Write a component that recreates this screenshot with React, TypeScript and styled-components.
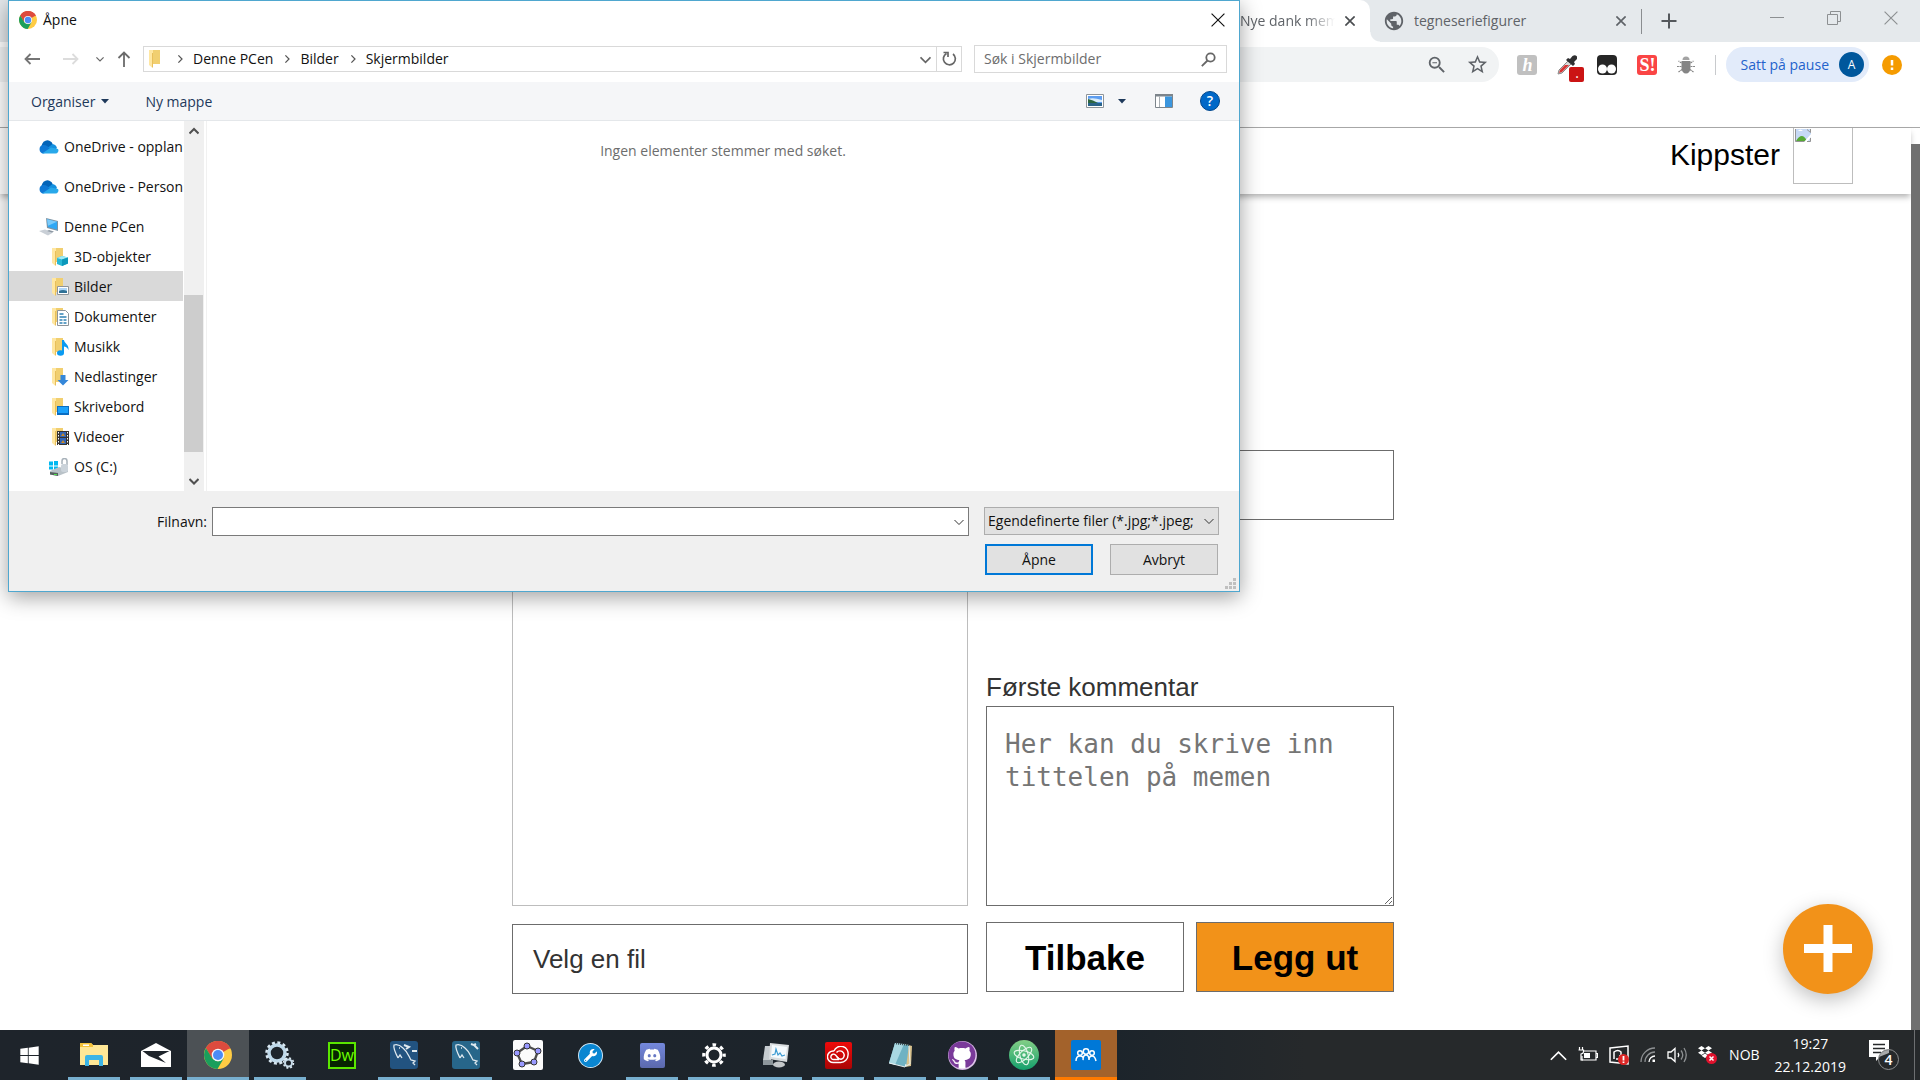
import React from 'react';
import styled, { createGlobalStyle } from 'styled-components';
import { FaDiscord, FaDropbox, FaGithub, FaWrench, FaWindows } from 'react-icons/fa';
import { MdPublic, MdStarBorder, MdZoomOut } from 'react-icons/md';

const ui = '"Open Sans", "Noto Sans", sans-serif';
const sans = '"Liberation Sans", Arial, sans-serif';
const mono = '"DejaVu Sans Mono", monospace';

const GlobalStyle = createGlobalStyle`
  *, *::before, *::after { box-sizing: border-box; }
  body { margin: 0; background: #fff; font-family: ${ui}; font-size: 14px; line-height: 20px; overflow: hidden; }
  button, input, select, textarea { font: inherit; color: inherit; margin: 0; border-radius: 0; }
  button { padding: 0; border: 0; background: none; cursor: pointer; }
  svg { display: block; flex: none; }
`;

const Screen = styled.div`
  position: relative;
  display: flex;
  flex-direction: column;
  min-height: 100vh;
`;

/* ---------- browser chrome ---------- */

const TabStrip = styled.div`
  display: flex;
  justify-content: flex-end;
  height: 42px;
  background: #e5e9ec;
  color: #5f6368;
`;

const Tab = styled.div<{ $active?: boolean }>`
  position: relative;
  display: flex;
  align-items: center;
  gap: 9px;
  width: ${p => (p.$active ? 176 : 271)}px;
  padding: ${p => (p.$active ? '0 14px 0 46px' : '0 14px 0 13px')};
  background: ${p => (p.$active ? '#fff' : 'transparent')};
  border-radius: 0 10px 0 0;
  &::after {
    content: '';
    display: ${p => (p.$active ? 'block' : 'none')};
    position: absolute;
    right: -10px;
    bottom: 0;
    width: 10px;
    height: 10px;
    background: radial-gradient(circle at 100% 0, transparent 9px, #fff 10px);
  }
`;

const TabTitle = styled.span<{ $fade?: boolean }>`
  flex: 1;
  overflow: hidden;
  white-space: nowrap;
  mask-image: ${p => (p.$fade ? 'linear-gradient(90deg, #000 70%, transparent)' : 'none')};
`;

const IconButton = styled.button`
  display: flex;
  align-items: center;
  justify-content: center;
  min-width: 12px;
`;

const StripDivider = styled.span`
  width: 1px;
  height: 25px;
  margin: 9px 12px 0 0;
  background: #8a8d90;
`;

const WindowButtons = styled.div`
  display: flex;
  align-items: flex-start;
  gap: 43px;
  margin: 11px 22px 0 86px;
`;

const Toolbar = styled.div`
  display: flex;
  align-items: center;
  height: 85px;
  padding: 5px 18px 45px 0;
  background: #fff;
`;

const Omnibox = styled.div`
  display: flex;
  flex: 1;
  align-items: center;
  justify-content: flex-end;
  gap: 18px;
  height: 35px;
  padding-right: 10px;
  border-radius: 0 18px 18px 0;
  background: #f1f3f4;
  color: #5f6368;
`;

const Extensions = styled.div`
  display: flex;
  align-items: center;
  gap: 20px;
  margin: 0 0 0 18px;
`;

const ExtTile = styled.span<{ $bg: string }>`
  display: flex;
  align-items: center;
  justify-content: center;
  width: 20px;
  height: 20px;
  border-radius: 3px;
  background: ${p => p.$bg};
  color: #fff;
  font: bold 18px/20px "Liberation Serif", serif;
`;

const PickerIcon = styled.span`
  position: relative;
  display: flex;
  width: 20px;
  height: 20px;
`;

const PickerBadge = styled.span`
  position: absolute;
  left: 12px;
  top: 12px;
  width: 15px;
  height: 15px;
  border-radius: 2px;
  background: #cb1414;
  color: #fff;
  font-size: 14px;
  line-height: 12px;
  text-align: center;
`;

const BarDivider = styled.span`
  width: 1px;
  height: 20px;
  background: #c8cacd;
`;

const ProfilePill = styled.button`
  display: flex;
  align-items: center;
  gap: 10px;
  height: 35px;
  margin: 0 13px 0 10px;
  padding: 0 5px 0 14px;
  border-radius: 18px;
  background: #e2ebfa;
  color: #2462cc;
`;

const Avatar = styled.span`
  width: 25px;
  height: 25px;
  border-radius: 50%;
  background: #00579c;
  color: #fff;
  font-size: 12px;
  line-height: 25px;
`;

/* ---------- web page ---------- */

const Viewport = styled.div`
  display: flex;
  flex: 1;
  border-top: 1px solid #a9a9a9;
`;

const Page = styled.div`
  display: flex;
  flex: 1;
  flex-direction: column;
  background: #fff;
`;

const ScrollGutter = styled.div`
  width: 9px;
  padding-top: 16px;
  &::before { content: ''; display: block; height: 100%; background: #707070; }
`;

const SiteHeader = styled.header`
  display: flex;
  align-items: flex-start;
  justify-content: flex-end;
  gap: 13px;
  height: 66px;
  padding-right: 58px;
  box-shadow: 0 4px 6px -1px rgba(0, 0, 0, 0.3);
`;

const UserName = styled.span`
  font: 30px/54px ${sans};
  color: #000;
`;

const BrokenImage = styled.span`
  width: 60px;
  height: 56px;
  padding: 1px;
  border: 1px solid #bdbdbd;
  border-top: 0;
`;

const Main = styled.main`
  display: flex;
  flex: 1;
  flex-direction: column;
  align-items: center;
  justify-content: flex-end;
  padding: 36px 5px 36px 0;
`;

const Form = styled.form`
  display: grid;
  grid-template-columns: 456px 408px;
  gap: 18px;
  min-height: 544px;
  font: 26px/30px ${sans};
  color: #333;
`;

const Column = styled.div<{ $gap: number }>`
  display: flex;
  flex-direction: column;
  gap: ${p => p.$gap}px;
`;

const Preview = styled.div`
  flex: 1;
  border: 1px solid #bdbdbd;
`;

const FileButton = styled.button`
  height: 70px;
  padding: 0 20px;
  border: 1px solid #6c6c6c;
  background: #fff;
  text-align: left;
`;

const TitleInput = styled.input`
  height: 70px;
  padding: 0 20px;
  border: 1px solid #6c6c6c;
  background: #fff;
`;

const Field = styled.div`
  display: flex;
  flex-direction: column;
  gap: 4px;
  margin-top: auto;
`;

const Comment = styled.textarea`
  height: 200px;
  padding: 21px 18px;
  border: 1px solid #6c6c6c;
  background: #fff;
  font: 26px/33px ${mono};
  overflow: hidden;
  &::placeholder { color: #757575; }
`;

const Actions = styled.div`
  display: flex;
  gap: 12px;
  padding-bottom: 2px;
`;

const ActionButton = styled.button<{ $primary?: boolean }>`
  flex: 1;
  height: 70px;
  padding-top: 2px;
  border: 1px solid #6c6c6c;
  background: ${p => (p.$primary ? '#f29219' : '#fff')};
  color: #000;
  font-size: 35px;
  font-weight: bold;
`;

const Fab = styled.button`
  position: absolute;
  right: 47px;
  bottom: 86px;
  display: flex;
  align-items: center;
  justify-content: center;
  width: 90px;
  height: 90px;
  border-radius: 50%;
  background: #f29219;
  box-shadow: 0 6px 20px rgba(0, 0, 0, 0.25);
`;

/* ---------- file dialog ---------- */

const Dialog = styled.section`
  position: absolute;
  left: 8px;
  top: 0;
  display: flex;
  flex-direction: column;
  width: 1232px;
  max-width: calc(100% - 16px);
  border: 1px solid #4fa7cf;
  background: #fff;
  color: #111;
  box-shadow: 0 5px 20px rgba(0, 0, 0, 0.38);
`;

const TitleBar = styled.header`
  display: flex;
  align-items: center;
  gap: 6px;
  height: 38px;
  padding: 0 14px 0 10px;
`;

const Grow = styled.span`
  flex: 1;
`;

const AddressRow = styled.div`
  display: flex;
  align-items: center;
  height: 43px;
  padding: 0 12px 3px 15px;
`;

const NavButtons = styled.div`
  display: flex;
  align-items: center;
  gap: 15px;
  width: 119px;
`;

const UpButton = styled(IconButton)`
  margin-left: -4px;
`;

const AddressBox = styled.div`
  display: flex;
  flex: 1;
  align-items: center;
  height: 26px;
  margin-right: 12px;
  padding-left: 2px;
  border: 1px solid #d9d9d9;
`;

const Crumb = styled.button`
  display: flex;
  align-items: center;
  gap: 9px;
  margin-left: 10px;
  line-height: 20px;
`;

const Refresh = styled.button`
  display: flex;
  align-items: center;
  justify-content: center;
  width: 25px;
  height: 24px;
  margin-left: 5px;
  border-left: 1px solid #d9d9d9;
`;

const SearchBox = styled.label`
  display: flex;
  align-items: center;
  width: 253px;
  height: 28px;
  padding: 0 10px 0 9px;
  border: 1px solid #d9d9d9;
`;

const SearchInput = styled.input`
  flex: 1;
  min-width: 0;
  padding: 0;
  border: 0;
  outline: 0;
  &::placeholder { color: #6d6d6d; }
`;

const CommandBar = styled.div`
  display: flex;
  align-items: center;
  height: 39px;
  padding: 0 19px 0 22px;
  border-bottom: 1px solid #e4e7ea;
  background: #f5f6f8;
  color: #1e395b;
`;

const Command = styled.button`
  display: flex;
  align-items: center;
  gap: 6px;
  margin-right: 36px;
  padding-top: 1px;
`;

const ViewTools = styled.div`
  display: flex;
  align-items: center;
  margin-left: auto;
`;

const HelpButton = styled.button`
  width: 20px;
  height: 20px;
  margin-left: 27px;
  border: 1px solid #00478c;
  border-radius: 50%;
  background: #0068c8;
  color: #fff;
  font-weight: 600;
  line-height: 18px;
`;

const ViewButton = styled.button`
  display: flex;
  align-items: center;
  gap: 14px;
  margin-right: 29px;
`;

const Browse = styled.div`
  display: flex;
  height: 370px;
`;

const Tree = styled.ul`
  width: 174px;
  margin: 0;
  padding: 10px 0;
  list-style: none;
  overflow: hidden;
`;

const TreeItem = styled.li<{ $gap?: boolean }>`
  margin-bottom: ${p => (p.$gap ? 10 : 0)}px;
`;

const TreeButton = styled.button<{ $level: number; $selected?: boolean }>`
  display: flex;
  align-items: center;
  gap: 5px;
  width: 100%;
  height: 30px;
  padding: 1px 0 0 ${p => (p.$level === 1 ? 30 : 40)}px;
  background: ${p => (p.$selected ? '#d9d9d9' : 'transparent')};
  white-space: nowrap;
`;

const TreeScroll = styled.div`
  display: flex;
  flex-direction: column;
  align-items: center;
  width: 20px;
  margin-left: 1px;
  padding: 5px 1px 5px 0;
  background: #f0f0f0;
`;

const TreeThumb = styled.span`
  width: 19px;
  height: 157px;
  margin: auto 0 24px;
  background: #cdcdcd;
`;

const Listing = styled.p`
  flex: 1;
  margin: 0 0 0 2px;
  padding: 20px 0 0;
  border-left: 1px solid #f1f1f1;
  color: #6d6d6d;
  text-align: center;
`;

const Footer = styled.footer`
  position: relative;
  display: grid;
  grid-template-columns: 757px 235px;
  justify-content: end;
  column-gap: 15px;
  row-gap: 8px;
  height: 100px;
  padding: 16px 20px 16px 0;
  background: #f0f0f0;
`;

const FileName = styled.div`
  position: relative;
  display: flex;
  align-items: center;
  height: 29px;
  border: 1px solid #7a7a7a;
  background: #fff;
`;

const FileNameLabel = styled.label`
  position: absolute;
  right: calc(100% + 6px);
`;

const FileNameInput = styled.input`
  flex: 1;
  height: 27px;
  padding: 0 4px;
  border: 0;
  outline: 0;
`;

const Chevron = styled.span`
  padding: 0 4px;
  pointer-events: none;
`;

const TypePicker = styled.div`
  display: flex;
  align-items: center;
  height: 28px;
  border: 1px solid #adadad;
  background: #e1e1e1;
`;

const TypeSelect = styled.select`
  flex: 1;
  min-width: 0;
  height: 26px;
  padding: 0 0 0 3px;
  border: 0;
  outline: 0;
  appearance: none;
  background: transparent;
`;

const DialogActions = styled.div`
  display: flex;
  grid-column: 2;
  justify-content: space-between;
  padding: 0 1px;
`;

const DialogButton = styled.button<{ $default?: boolean }>`
  width: 108px;
  height: 31px;
  border: ${p => (p.$default ? '2px solid #0078d7' : '1px solid #adadad')};
  background: #e1e1e1;
`;

const Grip = styled.svg`
  position: absolute;
  right: 3px;
  bottom: 2px;
`;

/* ---------- taskbar ---------- */

const Taskbar = styled.nav`
  display: flex;
  align-items: center;
  height: 50px;
  background: linear-gradient(90deg, #1e242b 0%, #1c242b 58%, #26292b 68%, #26292b 100%);
  color: #fff;
`;

const StartButton = styled.button`
  display: flex;
  align-items: center;
  justify-content: center;
  width: 63px;
  padding-right: 4px;
  color: #fff;
`;

const TaskButton = styled.button<{ $state?: 'open' | 'active' | 'alert' }>`
  position: relative;
  display: flex;
  align-items: center;
  justify-content: center;
  width: 62px;
  height: 50px;
  background: ${p => (p.$state === 'active' ? '#4c5155' : p.$state === 'alert' ? '#a3622b' : 'transparent')};
  &::after {
    content: '';
    position: absolute;
    left: ${p => (p.$state === 'open' ? 5 : 0)}px;
    right: ${p => (p.$state === 'open' ? 5 : 0)}px;
    bottom: 0;
    height: 3px;
    background: ${p => (!p.$state ? 'transparent' : p.$state === 'alert' ? '#ff7a00' : '#77afcf')};
  }
`;

const AppTile = styled.span<{ $bg: string; $size?: number }>`
  display: flex;
  align-items: center;
  justify-content: center;
  width: ${p => p.$size ?? 28}px;
  height: ${p => p.$size ?? 28}px;
  border-radius: 2px;
  background: ${p => p.$bg};
`;

const RoundTile = styled(AppTile)`
  border-radius: 50%;
  border: 1px solid rgba(255, 255, 255, 0.8);
`;

const DiscTile = styled(AppTile)`
  border-radius: 50%;
`;

const DwTile = styled.span`
  width: 28px;
  height: 27px;
  border: 2px solid #5ae600;
  background: #072401;
  color: #6bff00;
  font-size: 16px;
  line-height: 22px;
`;

const Tray = styled.div`
  display: flex;
  align-items: center;
  gap: 11px;
  margin-left: auto;
`;

const Clock = styled.time`
  margin: 0 12px 0 4px;
  line-height: 23px;
  text-align: center;
`;

const ShowDesktop = styled.span`
  width: 6px;
  height: 50px;
  margin-left: 4px;
  border-left: 1px solid #6d6f71;
`;

/* ---------- drawings ---------- */

const Chrome = ({ size }: { size: number }) => (
  <svg width={size} height={size} viewBox="0 0 28 28">
    <circle cx="14" cy="14" r="14" fill="#fc4" />
    <path d="M14 14 2 7A14 14 0 0 1 26 7z" fill="#dd4b3e" />
    <path d="M14 7.500H26.500A14 14 0 0 0 1.900 7L8 17.500z" fill="#dd4b3e" />
    <path d="M1.900 7A14 14 0 0 0 13.500 28L19.800 17.300 14 20.500 8.300 17.400z" fill="#1a9f5c" />
    <circle cx="14" cy="14" r="6.300" fill="#f4f6fa" />
    <circle cx="14" cy="14" r="5" fill="#4c8bf5" />
  </svg>
);

const Cross = ({ size, color, weight = 1 }: { size: number; color: string; weight?: number }) => (
  <svg width={size} height={size} viewBox="0 0 12 12" stroke={color} strokeWidth={weight}>
    <path d="M.5.5 11.500 11.500M11.500.5.5 11.500" />
  </svg>
);

const Angle = ({ dir, size = 10, color = '#666', weight = 1.5 }: { dir: 'up' | 'down' | 'right'; size?: number; color?: string; weight?: number }) => (
  <svg width={size} height={size} viewBox="0 0 10 10" fill="none" stroke={color} strokeWidth={weight}>
    <path d={dir === 'up' ? 'M.5 7.500 5 3l4.500 4.500' : dir === 'down' ? 'M.5 3 5 7.500 9.500 3' : 'M3 .5 7.500 5 3 9.500'} />
  </svg>
);

const Caret = () => <svg width="8" height="5" viewBox="0 0 8 5" fill="#1e395b"><path d="M0 0h8L4 4.500z" /></svg>;

const Cloud = () => (
  <svg width="20" height="14" viewBox="0 0 20 14">
    <path d="M3 8a5.500 5.500 0 0 1 10.800-3.800L10 9z" fill="#0364b8" />
    <path d="M4.500 13.500A4.300 4.300 0 0 1 4 5a5 5 0 0 1 4 1l6 4z" fill="#0f78d4" />
    <path d="M9 7.500 13.500 4a5.500 5.500 0 0 1 4.500 4l-3 3z" fill="#1490df" />
    <path d="M3 13.500 12 7.600l7 1.400a3 3 0 0 1-2.500 4.500z" fill="#28a8ea" />
  </svg>
);

const Computer = () => (
  <svg width="20" height="18" viewBox="0 0 20 18">
    <path d="m7 0 12 3v10L8 10z" fill="#7d94a5" />
    <path d="m8 1.300 10 2.500v7.700L9 9z" fill="#2fa8f5" />
    <path d="m8 1.300 10 2.500-9 4z" fill="#7bcbfa" />
    <path d="m0 13 6-1.500 8 3-5 3z" fill="#c9cfd6" />
    <path d="m10 12 5 1.500-2 1-5-1.500z" fill="#8c98a3" />
  </svg>
);

const Drive = () => (
  <svg width="20" height="18" viewBox="0 0 20 18">
    <path d="M0 3.500h4v4H0zM5 3h4v4.500H5zM0 8.500h4v3H0zM5 8.500h4v3H5z" fill="#00b8f0" />
    <path d="m1 13 9-4 9 2v3l-10 4-8-1.500z" fill="#b9c2c8" />
    <path d="m1 14 8 1v3l-8-1.500z" fill="#56605f" />
    <path d="M5 16h3v1H5z" fill="#4be04b" />
    <path d="M13 6V3a2.500 2.500 0 0 1 5 0v4" fill="none" stroke="#a8b2ba" strokeWidth="1.500" />
    <rect x="12" y="6" width="7" height="8" rx="2" fill="#cbd3da" />
  </svg>
);

type Overlay = 'none' | 'cube' | 'picture' | 'document' | 'music' | 'download' | 'desktop' | 'film';

const Folder = ({ overlay }: { overlay: Overlay }) => (
  <svg width="20" height="18" viewBox="-2 0 20 18">
    <path d="M4 0h8v14H4z" fill="#f1cf70" />
    <path d="M1 0h4v16l-1 1.500L1 15z" fill="#ffe7a2" />
    <path d="M4 3h1v14l-1 1z" fill="#e8bf5b" />
    {overlay === 'cube' && <><path d="m6 10 5-2 6 1.500v6L11 18l-5-2z" fill="#28b8d5" /><path d="m6 10 5-2 6 1.500-6 2z" fill="#9eeaf5" /><path d="m11 11.500 6-2v6L11 18z" fill="#0b98bb" /></>}
    {overlay === 'picture' && <><path d="M6.500 8.500h11v8h-11z" fill="#fff" stroke="#8e9499" /><path d="M8 10h8v3H8z" fill="#aed5f8" /><path d="M8 13q4-2 8 0v2H8z" fill="#2e7095" /></>}
    {overlay === 'document' && <><path d="M6.500 2.500h8l3 3v12h-11z" fill="#fff" stroke="#8e9499" /><path d="M8.500 6h4M8.500 9h7M8.500 12h3M12.500 12h3M8.500 15h3M12.500 15h3" stroke="#3183b5" strokeWidth="1.300" /></>}
    {overlay === 'music' && <><ellipse cx="9.500" cy="15" rx="3.500" ry="2.700" fill="#0a9bf2" /><path d="M11 2h2c0 3 5 4 4.500 10-1.500-3-3-3.500-4.500-3.500V15h-2z" fill="#0a9bf2" /></>}
    {overlay === 'download' && <path d="M9.500 7h5v5h3L12 17.500 6.500 12h3z" fill="#3487d9" />}
    {overlay === 'desktop' && <><path d="M6 8h12v9H6z" fill="#0a6dc2" /><path d="M7 9h10v6H7z" fill="#1ba1fb" /></>}
    {overlay === 'film' && <><path d="M6 3h12v14H6z" fill="#36332f" /><path d="M9 4h6v5H9zM9 10h6v6H9z" fill="#3265b5" /><path d="m10 8 2-3 2 3zM10 15l2-3 2 3z" fill="#c6892d" /><path d="M7.500 4v13M16.500 4v13" stroke="#fff" strokeDasharray="1.500 1.500" /></>}
  </svg>
);

const Landscape = () => (
  <svg width="18" height="14" viewBox="0 0 18 14">
    <path d="M.5.5h17v13H.5z" fill="#fff" stroke="#8e9499" />
    <path d="M2 2h14v10H2z" fill="#5d9df0" />
    <path d="M2 5q5-2 14 1v2H2z" fill="#d9ecfb" />
    <path d="M2 5q5 1 10 4H2z" fill="#2d6640" />
    <path d="M2 9h14v3H2z" fill="#2a6389" />
  </svg>
);

const PreviewPane = () => (
  <svg width="18" height="14" viewBox="0 0 18 14">
    <path d="M.5.5h17v13H.5z" fill="#fff" stroke="#7d858c" />
    <path d="M0 0h18v2.500H0z" fill="#7d858c" />
    <path d="M4.500 2.500V13" stroke="#a8aeb3" />
    <path d="M10 2.500h7V13h-7z" fill="#3b96de" />
  </svg>
);

const EyeDropper = () => (
  <svg width="20" height="20" viewBox="0 0 20 20">
    <path d="m1 19 1-4L12 5l3 3L5 18z" fill="#d9d9d9" stroke="#8a8a8a" />
    <path d="m2 18 1-3 5-5h4L5 17z" fill="#d93434" />
    <path d="m9 5 2-2 2 1 2.500-3Q18-.500 19.500 1t0 3.500L17 7l1 2-2 2z" fill="#2f2f31" />
  </svg>
);

const Beetle = () => (
  <svg width="18" height="18" viewBox="0 0 18 18" fill="#858585">
    <path d="M5.500 4a3.500 3.500 0 0 1 7 0z" fill="#a3a3a3" />
    <path d="M4.500 5h9v7a4.500 5.500 0 0 1-9 0z" />
    <path d="m4.500 7-3-2M4.500 10.500H0M5 13.500l-3.500 2.500M13.500 7l3-2M13.500 10.500H18M13 13.500l3.500 2.500" stroke="#858585" strokeWidth="1.200" strokeDasharray="2 .6" />
  </svg>
);

const Gear = ({ size, color }: { size: number; color: string }) => (
  <svg width={size} height={size} viewBox="0 0 24 24" fill="none" stroke={color}>
    <circle cx="12" cy="12" r="7" strokeWidth="3" />
    <circle cx="12" cy="12" r="10.200" strokeWidth="3.200" strokeDasharray="3.600 4.410" strokeDashoffset="1.800" />
  </svg>
);

const Services = () => (
  <svg width="30" height="28" viewBox="0 0 30 28" fill="none">
    <circle cx="12" cy="12" r="8" stroke="#bfd9ea" strokeWidth="3.500" />
    <circle cx="12" cy="12" r="10.500" stroke="#d9e8f2" strokeWidth="2.500" strokeDasharray="3 2.500" />
    <circle cx="23.500" cy="22" r="3.500" stroke="#c6dbe9" strokeWidth="2" />
    <circle cx="23.500" cy="22" r="5" stroke="#dceaf3" strokeWidth="1.500" strokeDasharray="2 1.930" />
  </svg>
);

const Explorer = () => (
  <svg width="28" height="24" viewBox="0 0 28 24">
    <path d="M0 1q0-1 1-1h10l2 2h15v20H0z" fill="#ffe796" />
    <path d="M0 1q0-1 1-1h10l2 2v2H0z" fill="#f5c238" />
    <path d="M3 1.500h6v1.500H3z" fill="#fff" />
    <path d="M5 23V14q0-2 2-2h14q2 0 2 2v9h-4v-6H9v6z" fill="#3cb4e6" />
  </svg>
);

const Mail = () => (
  <svg width="30" height="24" viewBox="0 0 30 24">
    <path d="M0 8 15 0l15 8v16H0z" fill="#fff" />
    <path d="M1.500 8h27l-11 5.500 7.500 6.500L8 13z" fill="#1e242b" />
  </svg>
);

const Dolphin = ({ tool }: { tool: 'bench' | 'wrench' }) => (
  <svg width="28" height="28" viewBox="0 0 28 28" fill="none" stroke="#dfe9ef" strokeWidth="1.300">
    <rect width="28" height="28" rx="3" fill={tool === 'bench' ? '#225380' : '#27668a'} stroke="none" />
    <path d="M8 17C5 11 3 7 4 4c3-1 6 0 9 3 5 4 6 9 8 12l4 1-2 2 2 2M8 17l2-3 2 3M9 7h1" />
    {tool === 'bench'
      ? <path d="m14 4 5 2-3 2M22 10h5" strokeWidth="2" />
      : <path d="m19 3 3 1 4 4M22 4l2-1" strokeWidth="2" />}
  </svg>
);

const GeoGebra = () => (
  <svg width="30" height="30" viewBox="0 0 30 30">
    <rect width="30" height="30" rx="2" fill="#fbfbfb" />
    <path d="M14 6 25 11 21 22 9 24 4 13z" fill="none" stroke="#4c4c4c" strokeWidth="2.300" strokeLinejoin="round" />
    <g fill="#9999ff" stroke="#333"><circle cx="14" cy="6" r="3" /><circle cx="25" cy="11" r="3" /><circle cx="21" cy="22" r="3" /><circle cx="9" cy="24" r="3" /><circle cx="4" cy="13" r="3" /></g>
  </svg>
);

const Monitor = () => (
  <svg width="28" height="26" viewBox="0 0 28 26">
    <path d="M3 4h8l-2 14H1z" fill="#c6ccd0" />
    <path d="M1 18h10v5H1z" fill="#8d969b" />
    <path d="m8 1 19 2-2 17L7 17z" fill="#d9dddf" />
    <path d="m10 3 15 2-1.500 12L9 15z" fill="#f5fafd" />
    <path d="m10 13 3-1 1-5 2 6 2-2 2 3 3-1" fill="none" stroke="#3c9bd2" strokeWidth="1.200" />
    <ellipse cx="17" cy="22.500" rx="6" ry="3" fill="#c4c8ca" />
  </svg>
);

const CreativeCloud = () => (
  <svg width="22" height="18" viewBox="0 0 22 18" fill="none" stroke="#fff" strokeWidth="1.400">
    <path d="M7 5A7.300 7.300 0 0 1 21 9a7.300 7.300 0 0 1-7.500 7.500H7A5.800 5.800 0 1 1 7 5" />
    <path d="m12 13-3.500-4a2.700 2.700 0 1 0-1.500 4.500h5" />
    <path d="M9.500 6.500a4.300 4.300 0 1 1 4.500 6.800q-2.500 0-4-2.300" />
  </svg>
);

const Notepad = () => (
  <svg width="28" height="28" viewBox="0 0 28 28">
    <path d="m19 3 7 2-1 20-6 1z" fill="#d8c28e" />
    <path d="m9 2 14 2-3 22-17-4z" fill="#6fb2c3" />
    <path d="m9 2 9 1-9 21-6-2z" fill="#a9d8e2" />
    <path d="m3 22 16 4 1-3" fill="none" stroke="#ecf4f6" />
    <path d="m23 5 1 18-4 2" fill="none" stroke="#e6f0f3" />
    <path d="M10 2.500 23 4" stroke="#35454b" strokeWidth="2" strokeDasharray="1 1" />
  </svg>
);

const Atom = () => (
  <svg width="22" height="26" viewBox="0 0 24 24" fill="none" stroke="#e6f8ec" strokeWidth="1.200">
    <ellipse cx="12" cy="12" rx="11" ry="4.500" transform="rotate(15 12 12)" />
    <ellipse cx="12" cy="12" rx="11" ry="4.500" transform="rotate(75 12 12)" />
    <ellipse cx="12" cy="12" rx="11" ry="4.500" transform="rotate(135 12 12)" />
    <circle cx="12" cy="12" r="1.300" fill="#e6f8ec" />
  </svg>
);

const People = () => (
  <svg width="22" height="14" viewBox="0 0 22 14" fill="none" stroke="#fff" strokeWidth="1.500">
    <circle cx="5" cy="5" r="2.300" /><circle cx="17" cy="5" r="2.300" /><circle cx="11" cy="3.500" r="2.700" />
    <path d="M1 13q0-5 4-5t3 4q0-5 3-5t3 5q0-4 3-4t4 5" />
  </svg>
);

const Battery = () => (
  <svg width="20" height="16" viewBox="0 0 20 16" fill="none" stroke="#fff" strokeWidth="1.200">
    <path d="M6 4h12v9H4V9M18 6.500h1.500v4H18" /><path d="M6 6h6v5H6z" fill="#fff" stroke="none" />
    <path d="M1.500 0v3M4.500 0v3M.5 3h5v2q0 1.500-2.500 2v6h2" />
  </svg>
);

const UpdateAlert = () => (
  <svg width="20" height="20" viewBox="0 0 20 20" fill="none" stroke="#fff" strokeWidth="1.500">
    <path d="m1 3 18-2v18L1 17z" /><path d="M5 14V7q4-3 7 0v3M7 14h4v-4" />
    <circle cx="14.500" cy="14.500" r="5.500" fill="#dc2626" stroke="none" /><path d="M14.500 11v4.500M14.500 16.500V18" strokeWidth="1.800" />
  </svg>
);

const Wifi = () => (
  <svg width="16" height="16" viewBox="0 0 16 16" fill="none" stroke="#8e9193" strokeWidth="1.300">
    <path d="M1 15A14 14 0 0 1 15 1M5 15A10 10 0 0 1 15 5" /><path d="M9 15a6 6 0 0 1 6-6" stroke="#fff" />
    <path d="M12.500 12.500H15V15h-2.500z" fill="#fff" stroke="none" />
  </svg>
);

const Volume = () => (
  <svg width="20" height="18" viewBox="0 0 20 18" fill="none" stroke="#fff" strokeWidth="1.300">
    <path d="M1 6h3l4-3.500v13L4 12H1z" /><path d="M11 7q1.500 2 0 4" />
    <path d="M14 4.500q3.500 4.500 0 9M17 2q4.500 7 0 14" stroke="#8e9193" />
  </svg>
);

const DropboxError = () => (
  <svg width="20" height="20" viewBox="0 0 20 20">
    <FaDropbox x="0" y="0" width="18" height="18" color="#fff" />
    <circle cx="13.500" cy="13.500" r="5.500" fill="#e0122d" />
    <path d="m11.500 11.500 4 4m0-4-4 4" stroke="#fff" strokeWidth="1.500" />
  </svg>
);

const Notifications = () => (
  <svg width="30" height="30" viewBox="0 0 30 30">
    <path d="M0 0h20v17h-9l-4 4v-4H0z" fill="#fff" />
    <path d="M4 4.500h12M4 8.500h12M4 12.500h8" stroke="#26292b" strokeWidth="1.300" />
    <circle cx="19.500" cy="19.500" r="10" fill="#26292b" stroke="#8d8f90" />
    <path d="M10 17a10 10 0 0 1 10-7v3z" fill="#a7a9aa" />
    <text x="19.500" y="24.500" fill="#fff" fontSize="14" fontWeight="600" textAnchor="middle">4</text>
  </svg>
);

type TreeEntry = { label: string; level: number; icon: React.ReactNode; gap?: boolean; selected?: boolean };

const tree: TreeEntry[] = [
  { label: 'OneDrive - opplan', level: 1, icon: <Cloud />, gap: true },
  { label: 'OneDrive - Person', level: 1, icon: <Cloud />, gap: true },
  { label: 'Denne PCen', level: 1, icon: <Computer /> },
  { label: '3D-objekter', level: 2, icon: <Folder overlay="cube" /> },
  { label: 'Bilder', level: 2, icon: <Folder overlay="picture" />, selected: true },
  { label: 'Dokumenter', level: 2, icon: <Folder overlay="document" /> },
  { label: 'Musikk', level: 2, icon: <Folder overlay="music" /> },
  { label: 'Nedlastinger', level: 2, icon: <Folder overlay="download" /> },
  { label: 'Skrivebord', level: 2, icon: <Folder overlay="desktop" /> },
  { label: 'Videoer', level: 2, icon: <Folder overlay="film" /> },
  { label: 'OS (C:)', level: 2, icon: <Drive /> },
];

type Task = { name: string; state?: 'open' | 'active' | 'alert'; icon: React.ReactNode };

const tasks: Task[] = [
  { name: 'Filutforsker', state: 'open', icon: <Explorer /> },
  { name: 'E-post', state: 'open', icon: <Mail /> },
  { name: 'Chrome', state: 'active', icon: <Chrome size={28} /> },
  { name: 'Tjenester', state: 'open', icon: <Services /> },
  { name: 'Dreamweaver', icon: <DwTile>Dw</DwTile> },
  { name: 'MySQL Workbench', state: 'open', icon: <Dolphin tool="bench" /> },
  { name: 'MySQL', state: 'open', icon: <Dolphin tool="wrench" /> },
  { name: 'GeoGebra', icon: <GeoGebra /> },
  { name: 'Verktøy', icon: <RoundTile $bg="#0a86d1" $size={25}><FaWrench size={13} color="#fff" /></RoundTile> },
  { name: 'Discord', state: 'open', icon: <AppTile $bg="linear-gradient(#7488dc, #5b69ad)" $size={25}><FaDiscord size={18} color="#fff" /></AppTile> },
  { name: 'Innstillinger', state: 'open', icon: <Gear size={24} color="#fff" /> },
  { name: 'Ytelse', state: 'open', icon: <Monitor /> },
  { name: 'Creative Cloud', state: 'open', icon: <AppTile $bg="linear-gradient(#ef0a0a, #a90505)" $size={27}><CreativeCloud /></AppTile> },
  { name: 'Notisblokk', state: 'open', icon: <Notepad /> },
  { name: 'GitHub', state: 'open', icon: <DiscTile $bg="radial-gradient(#fff 60%, #c9a5da 70%)" $size={29}><FaGithub size={28} color="#7a3a9a" /></DiscTile> },
  { name: 'Atom', state: 'open', icon: <DiscTile $bg="linear-gradient(#84cf86, #14a06c)" $size={30}><Atom /></DiscTile> },
  { name: 'Personer', state: 'alert', icon: <AppTile $bg="#0078d7" $size={30}><People /></AppTile> },
];

function Browser() {
  return (
    <>
      <TabStrip>
        <Tab $active>
          <TabTitle $fade>Nye dank memes</TabTitle>
          <IconButton aria-label="Lukk fane"><Cross size={10} color="#4a4d50" weight={2} /></IconButton>
        </Tab>
        <Tab>
          <MdPublic size={22} />
          <TabTitle>tegneseriefigurer</TabTitle>
          <IconButton aria-label="Lukk fane"><Cross size={10} color="#5f6368" weight={2} /></IconButton>
        </Tab>
        <StripDivider />
        <IconButton aria-label="Ny fane">
          <svg width="30" height="16" viewBox="0 0 30 16" stroke="#54585c" strokeWidth="2"><path d="M7.500 8h15M15 .5v15" /></svg>
        </IconButton>
        <WindowButtons>
          <IconButton aria-label="Minimer"><svg width="14" height="14" viewBox="0 0 14 14" stroke="#8d9092"><path d="M0 6.500h14" /></svg></IconButton>
          <IconButton aria-label="Gjenopprett"><svg width="14" height="14" viewBox="0 0 14 14" fill="none" stroke="#8d9092"><path d="M.5 3.500h10v10H.5zM3.500 3V.5h10v10H11" /></svg></IconButton>
          <IconButton aria-label="Lukk"><Cross size={14} color="#8d9092" /></IconButton>
        </WindowButtons>
      </TabStrip>
      <Toolbar>
        <Omnibox>
          <MdZoomOut size={22} />
          <MdStarBorder size={23} />
        </Omnibox>
        <Extensions>
          <ExtTile $bg="#c0c0c0"><i>h</i></ExtTile>
          <PickerIcon><EyeDropper /><PickerBadge>.</PickerBadge></PickerIcon>
          <svg width="20" height="20" viewBox="0 0 20 20">
            <rect width="20" height="20" rx="4" fill="#262626" />
            <circle cx="5.500" cy="14" r="4.500" fill="#fff" /><circle cx="14.500" cy="14" r="4.500" fill="#fff" />
          </svg>
          <ExtTile $bg="#fa4545">S!</ExtTile>
          <Beetle />
          <BarDivider />
        </Extensions>
        <ProfilePill>Satt på pause<Avatar>A</Avatar></ProfilePill>
        <svg width="20" height="20" viewBox="0 0 20 20"><circle cx="10" cy="10" r="10" fill="#f59b00" /><path d="M10 5v5.500M10 12.500V15" stroke="#fff" strokeWidth="2.500" /></svg>
      </Toolbar>
      <Viewport>
        <Page>
          <SiteHeader>
            <UserName>Kippster</UserName>
            <BrokenImage>
              <svg width="16" height="13" viewBox="0 0 16 13">
                <path d="M0 0h16v12.500H0z" fill="#c6d9f5" />
                <path d="M3 2q2-3 5 0z" fill="#fff" /><path d="M1 12q6-10 11 0z" fill="#56a936" />
                <path d="m9 13 7-8v3l-4 5z" fill="#fff" />
                <path d="M.5 0v12.500h9M12 .5l3.500 3V0M15.500 9v3.500H12" fill="none" stroke="#949494" />
              </svg>
            </BrokenImage>
          </SiteHeader>
          <Main>
            <Form onSubmit={e => e.preventDefault()}>
              <Column $gap={18}>
                <Preview />
                <FileButton type="button">Velg en fil</FileButton>
              </Column>
              <Column $gap={16}>
                <TitleInput aria-label="Tittel" />
                <Field>
                  <label htmlFor="comment">Første kommentar</label>
                  <Comment id="comment" placeholder="Her kan du skrive inn tittelen på memen" />
                </Field>
                <Actions>
                  <ActionButton type="button">Tilbake</ActionButton>
                  <ActionButton $primary>Legg ut</ActionButton>
                </Actions>
              </Column>
            </Form>
          </Main>
        </Page>
        <ScrollGutter />
      </Viewport>
      <Fab aria-label="Ny">
        <svg width="48" height="48" viewBox="0 0 48 48" stroke="#fff" strokeWidth="9"><path d="M0 23.500h48M24 0v47" /></svg>
      </Fab>
    </>
  );
}

function OpenDialog() {
  return (
    <Dialog role="dialog" aria-labelledby="dialog-title">
      <TitleBar>
        <Chrome size={18} />
        <span id="dialog-title">Åpne</span>
        <Grow />
        <IconButton aria-label="Lukk"><Cross size={14} color="#111" /></IconButton>
      </TitleBar>
      <AddressRow>
        <NavButtons>
          <IconButton aria-label="Tilbake"><svg width="16" height="14" viewBox="0 0 16 14" fill="none" stroke="#757575" strokeWidth="1.800"><path d="M1.500 7H16M6.500 2l-5 5 5 5" /></svg></IconButton>
          <IconButton aria-label="Frem"><svg width="24" height="14" viewBox="0 0 24 14" fill="none" stroke="#dcdcdc" strokeWidth="1.800"><path d="M8 7h15M17.500 2l5 5-5 5" /></svg></IconButton>
          <IconButton aria-label="Nylige"><Angle dir="down" size={8} /></IconButton>
          <UpButton aria-label="Opp"><svg width="14" height="16" viewBox="0 0 14 16" fill="none" stroke="#6b6b6b" strokeWidth="1.800"><path d="M7 1.500V16M1.500 7 7 1.500 12.500 7" /></svg></UpButton>
        </NavButtons>
        <AddressBox>
          <Folder overlay="none" />
          {['Denne PCen', 'Bilder', 'Skjermbilder'].map(name => (
            <Crumb key={name}><Angle dir="right" size={8} color="#555" />{name}</Crumb>
          ))}
          <Grow />
          <IconButton aria-label="Vis adresser"><Angle dir="down" size={11} /></IconButton>
          <Refresh aria-label="Oppdater">
            <svg width="15" height="16" viewBox="0 0 15 16" fill="none" stroke="#666" strokeWidth="1.700"><path d="M11 3a6 6 0 1 1-6.500-.5M1.500 1.500h4.500v4.500" /></svg>
          </Refresh>
        </AddressBox>
        <SearchBox>
          <SearchInput placeholder="Søk i Skjermbilder" />
          <svg width="15" height="15" viewBox="0 0 15 15" fill="none" stroke="#666" strokeWidth="1.800"><circle cx="9.500" cy="5.500" r="4.200" /><path d="M6.500 8.500.8 14.200" /></svg>
        </SearchBox>
      </AddressRow>
      <CommandBar>
        <Command>Organiser<Caret /></Command>
        <Command>Ny mappe</Command>
        <ViewTools>
          <ViewButton aria-label="Visning"><Landscape /><Caret /></ViewButton>
          <IconButton aria-label="Forhåndsvisning"><PreviewPane /></IconButton>
          <HelpButton>?</HelpButton>
        </ViewTools>
      </CommandBar>
      <Browse>
        <Tree>
          {tree.map(item => (
            <TreeItem key={item.label} $gap={item.gap}>
              <TreeButton $level={item.level} $selected={item.selected}>{item.icon}{item.label}</TreeButton>
            </TreeItem>
          ))}
        </Tree>
        <TreeScroll>
          <Angle dir="up" weight={2} color="#505050" />
          <TreeThumb />
          <Angle dir="down" weight={2} color="#505050" />
        </TreeScroll>
        <Listing>Ingen elementer stemmer med søket.</Listing>
      </Browse>
      <Footer>
        <FileName>
          <FileNameLabel htmlFor="file-name">Filnavn:</FileNameLabel>
          <FileNameInput id="file-name" />
          <Chevron><Angle dir="down" weight={1} color="#333" /></Chevron>
        </FileName>
        <TypePicker>
          <TypeSelect aria-label="Filtype"><option>Egendefinerte filer (*.jpg;*.jpeg;</option></TypeSelect>
          <Chevron><Angle dir="down" weight={1} color="#333" /></Chevron>
        </TypePicker>
        <DialogActions>
          <DialogButton $default>Åpne</DialogButton>
          <DialogButton>Avbryt</DialogButton>
        </DialogActions>
        <Grip width="11" height="11" viewBox="0 0 11 11" fill="#bfbfbf">
          <path d="M8 0h3v3H8zM4 4h3v3H4zM8 4h3v3H8zM0 8h3v3H0zM4 8h3v3H4zM8 8h3v3H8z" />
        </Grip>
      </Footer>
    </Dialog>
  );
}

export default function App() {
  return (
    <Screen>
      <GlobalStyle />
      <Browser />
      <OpenDialog />
      <Taskbar>
        <StartButton aria-label="Start"><FaWindows size={21} /></StartButton>
        {tasks.map(task => (
          <TaskButton key={task.name} aria-label={task.name} $state={task.state}>{task.icon}</TaskButton>
        ))}
        <Tray>
          <Angle dir="up" size={17} color="#fff" weight={1} />
          <Battery />
          <UpdateAlert />
          <Wifi />
          <Volume />
          <DropboxError />
          <span>NOB</span>
          <Clock>19:27<br />22.12.2019</Clock>
          <Notifications />
          <ShowDesktop />
        </Tray>
      </Taskbar>
    </Screen>
  );
}
